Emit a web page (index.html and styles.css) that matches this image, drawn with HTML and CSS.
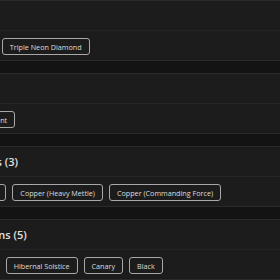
FILE: index.html
```html
<!DOCTYPE html>
<html lang="en">
  <head>
    <meta charset="UTF-8" />
    <meta name="viewport" content="width=device-width, initial-scale=1.0" />
    <title>Finishes</title>
    <link rel="stylesheet" href="styles.css">
  </head>
  <body>
    <div class="page">
      <section class="group">
        <div class="group-header">Diamonds (2)</div>
        <div class="group-body">
          <span class="chip">Neon Diamond</span>
          <span class="chip">Triple Neon Diamond</span>
        </div>
      </section>

      <section class="group">
        <div class="group-header">Accents (1)</div>
        <div class="group-body">
          <span class="chip">Brushed Gold Accent</span>
        </div>
      </section>

      <section class="group">
        <div class="group-header">Copper Tones (3)</div>
        <div class="group-body">
          <span class="chip">Copper (Standard)</span>
          <span class="chip">Copper (Heavy Mettle)</span>
          <span class="chip">Copper (Commanding Force)</span>
        </div>
      </section>

      <section class="group">
        <div class="group-header">Signature Skins (5)</div>
        <div class="group-body">
          <span class="chip">Titanium Mirage</span>
          <span class="chip">Hibernal Solstice</span>
          <span class="chip">Canary</span>
          <span class="chip">Black</span>
        </div>
      </section>
    </div>
  </body>
</html>
```

FILE: styles.css
```css
body {
  margin: 0;
  background-color: #131313;
  font-family: "Open Sans", Arial, sans-serif;
  color: #e0e0e0;
  overflow: hidden;
}
.page {
  display: flex;
  flex-direction: column;
  gap: 12px;
  margin-top: 0;
  margin-left: -83px;
  width: 420px;
}
.group {
  background-color: #1c1c1c;
  border-top: 1px solid #2a2a2a;
  border-bottom: 1px solid #2a2a2a;
}
.group-header {
  height: 29px;
  padding: 0 12px;
  display: flex;
  align-items: center;
  font-size: 11px;
  font-weight: 600;
  border-bottom: 1px solid #252525;
}
.group-body {
  display: flex;
  flex-wrap: wrap;
  gap: 6px;
  padding: 7px 12px 5px;
}
.chip {
  height: 17px;
  box-sizing: border-box;
  display: flex;
  align-items: center;
  padding: 0 7px;
  border: 1px solid #a8a8a8;
  border-radius: 3px;
  font-size: 7.2px;
  color: #dcdcdc;
  white-space: nowrap;
}
```
